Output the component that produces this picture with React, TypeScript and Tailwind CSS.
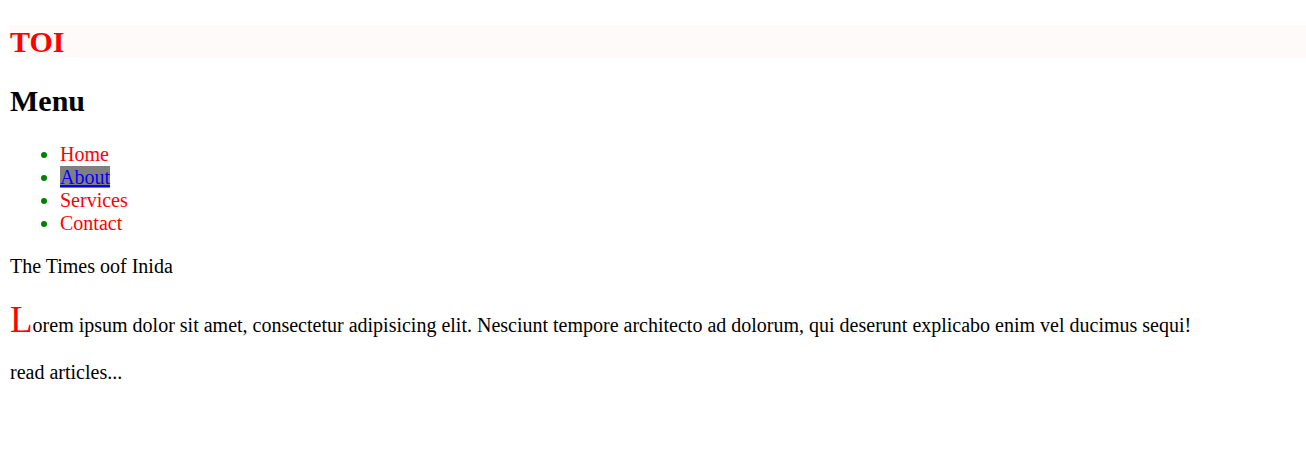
export default function App() {
  const items = ['Home', 'About', 'Services', 'Contact'];

  return (
    <div className="min-h-[475px] bg-white pl-[10px] pt-[25px] font-['Liberation_Serif','Times_New_Roman',serif] text-[20px] leading-[23px] text-black">
      <header className="bg-[#fffafa]">
        <h1 className="text-[30px] font-bold leading-[33px] text-[#ff0000]">TOI</h1>
      </header>

      <nav>
        <h2 className="mt-[25px] text-[30px] font-bold leading-[35px]">Menu</h2>
        <ul className="mt-[25px] list-disc pl-[50px] marker:text-[#008000]">
          {items.map((item) => (
            <li key={item}>
              {item === 'About' ? (
                <a href="#" className="bg-[#808080] text-[#0000ff] underline">
                  {item}
                </a>
              ) : (
                <a href="#" className="text-[#ff0000]">
                  {item}
                </a>
              )}
            </li>
          ))}
        </ul>
      </nav>

      <p className="mt-[20px]">The Times oof Inida</p>
      <p className="mt-[20px] first-letter:text-[37px] first-letter:leading-[43px] first-letter:text-[#ff0000]">
        Lorem ipsum dolor sit amet, consectetur adipisicing elit. Nesciunt tempore architecto ad dolorum, qui
        deserunt explicabo enim vel ducimus sequi!
      </p>
      <p className="mt-[20px]">read articles...</p>
    </div>
  );
}
